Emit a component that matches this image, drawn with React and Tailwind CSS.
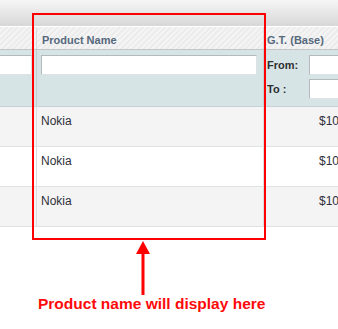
import React from "react";

const rows = ["Nokia", "Nokia", "Nokia"];

function FilterInput({ className = "" }) {
  return (
    <div
      className={`h-[20px] bg-white border border-[#b4b9bb] border-b-[#dde2e3] border-r-[#dde2e3] ${className}`}
    />
  );
}

export default function App() {
  return (
    <div className="relative w-[338px] h-[329px] overflow-hidden bg-white font-['Liberation_Sans',Arial,sans-serif]">
      {/* top toolbar */}
      <div className="h-[26px] bg-gradient-to-b from-[#f6f6f6] to-[#d7d7d7]" />

      {/* header row */}
      <div className="flex h-[24px] border-t border-white border-b border-b-[#c2c6c8] bg-[repeating-linear-gradient(135deg,#ececec_0px,#ececec_2px,#f4f4f4_2px,#f4f4f4_4px)] text-[11px] font-bold text-[#56697c]">
        <div className="w-[37px] shrink-0 border-r border-[#d8dcdd]" />
        <div className="w-[227px] shrink-0 border-r border-[#d8dcdd] pl-[5px] pt-[5px]">
          Product Name
        </div>
        <div className="flex-1 pl-[3px] pt-[5px] whitespace-nowrap">G.T. (Base)</div>
      </div>

      {/* filter row */}
      <div className="flex h-[57px] border-b border-[#c7d2d4] bg-[#d7e4e6]">
        <div className="w-[37px] shrink-0 border-r border-[#c3cfd1] pt-[5px]">
          <FilterInput className="w-[32px] border-l-0" />
        </div>
        <div className="w-[227px] shrink-0 border-r border-[#c3cfd1] pl-[4px] pr-[6px] pt-[5px]">
          <FilterInput className="w-full" />
        </div>
        <div className="flex-1 flex flex-col gap-[4px] pt-[5px] pl-[3px] text-[11px] font-bold text-[#2f2f2f]">
          <div className="flex items-center gap-[10px]">
            <span className="w-[32px]">From:</span>
            <FilterInput className="w-[60px]" />
          </div>
          <div className="flex items-center gap-[10px]">
            <span className="w-[32px]">To :</span>
            <FilterInput className="w-[60px]" />
          </div>
        </div>
      </div>

      {/* data rows */}
      {rows.map((name, i) => (
        <div
          key={i}
          className={`flex h-[40px] border-b border-[#dfe2e3] text-[12px] text-[#2f2f38] ${
            i % 2 === 0 ? "bg-[#f4f4f4]" : "bg-white"
          }`}
        >
          <div className="w-[37px] shrink-0 border-r border-[#dadddf]" />
          <div className="w-[227px] shrink-0 border-r border-[#dadddf] pl-[4px] pt-[5px]">
            {name}
          </div>
          <div className="flex-1 pl-[55px] pt-[5px] whitespace-nowrap">$100.00</div>
        </div>
      ))}

      {/* annotation */}
      <div className="pl-[136px] pt-[14px] leading-none">
        <svg className="block" width="14" height="54" viewBox="0 0 14 54">
          <polygon points="7,0 14,13 0,13" fill="#ff0000" />
          <rect x="5.5" y="12" width="3" height="42" fill="#ff0000" />
        </svg>
      </div>
      <div className="pl-[38px] text-[15.5px] leading-[18px] font-bold text-[#ff0a0a] whitespace-nowrap">
        Product name will display here
      </div>

      {/* red highlight box over the product name column */}
      <div className="absolute left-[32px] top-[13px] w-[234px] h-[227px] border-2 border-[#ff0000]" />
    </div>
  );
}
